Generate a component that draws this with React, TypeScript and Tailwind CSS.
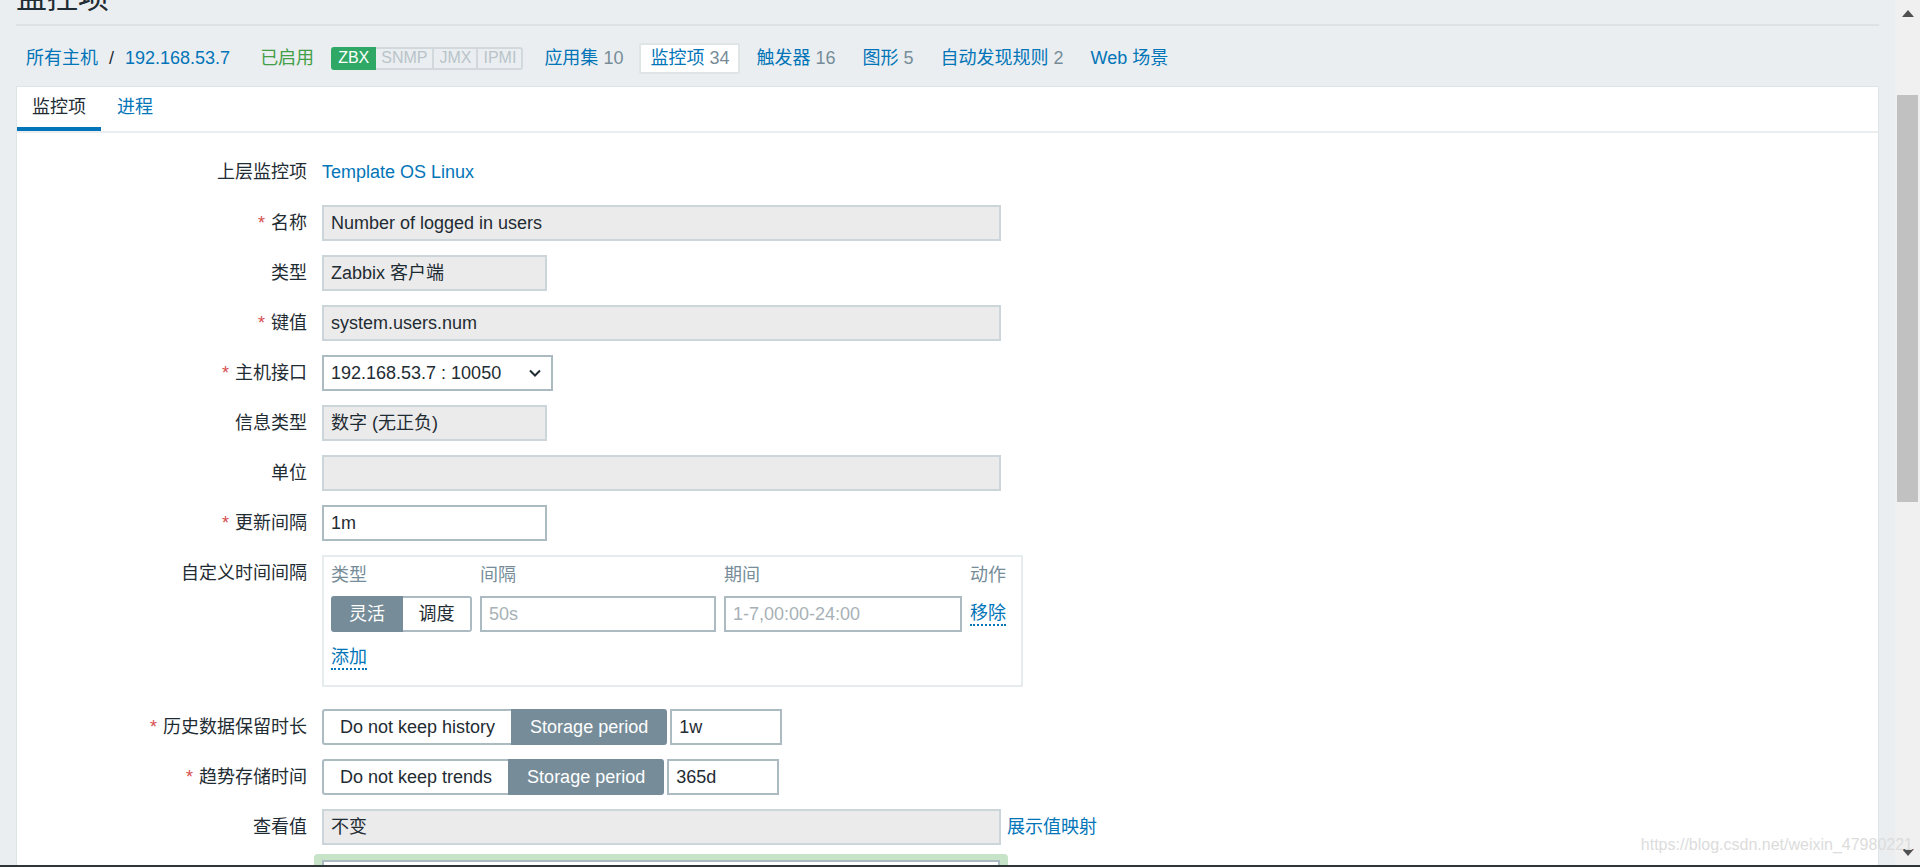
import React from "react";

const navTabs = [
  { name: "应用集", count: "10" },
  { name: "监控项", count: "34", active: true },
  { name: "触发器", count: "16" },
  { name: "图形", count: "5" },
  { name: "自动发现规则", count: "2" },
  { name: "Web 场景" },
];

const badges = ["SNMP", "JMX", "IPMI"];

function Label({ text, required }: { text: string; required?: boolean }) {
  return (
    <div className="w-[290px] h-[36px] flex-shrink-0 flex items-center justify-end text-[#1f2c33]">
      {required && <span className="text-[#d64e4e] mr-[6px]">*</span>}
      {text}
    </div>
  );
}

function Row({
  label,
  required,
  children,
  className = "",
}: {
  label: string;
  required?: boolean;
  children: React.ReactNode;
  className?: string;
}) {
  return (
    <div className={`flex items-start gap-[15px] ${className}`}>
      <Label text={label} required={required} />
      {children}
    </div>
  );
}

function Field({
  value,
  width,
  readOnly,
  placeholder,
}: {
  value?: string;
  width: string;
  readOnly?: boolean;
  placeholder?: string;
}) {
  return (
    <div
      className={`${width} h-[36px] border-2 px-[7px] flex items-center whitespace-nowrap ${
        readOnly
          ? "bg-[#ebebeb] border-[#ccd5d9] text-[#1f2c33]"
          : "bg-white border-[#acbbc2] text-[#1f2c33]"
      }`}
    >
      {value ?? <span className="text-[#a7b1b6]">{placeholder}</span>}
    </div>
  );
}

function Toggle({ off, on }: { off: string; on: string }) {
  return (
    <div className="flex h-[36px]">
      <div className="px-[16px] flex items-center bg-white border-2 border-r-0 border-[#acbbc2] rounded-l-[3px] text-[#1f2c33] whitespace-nowrap">
        {off}
      </div>
      <div className="px-[17px] flex items-center bg-[#768d99] border-2 border-[#768d99] rounded-r-[3px] text-white whitespace-nowrap">
        {on}
      </div>
    </div>
  );
}

function DottedLink({ children }: { children: React.ReactNode }) {
  return (
    <span className="text-[#0275b8] border-b-2 border-dotted border-[#0275b8] leading-[22px]">
      {children}
    </span>
  );
}

export default function App() {
  return (
    <div className="w-[1920px] h-[867px] flex flex-col overflow-hidden bg-[#ebeef0] text-[18px] font-['Liberation_Sans','Noto_Sans_CJK_SC',sans-serif] relative">
      <div className="h-[865px] shrink-0 flex overflow-hidden">
        {/* main column */}
        <div className="flex-1 min-h-0 px-[16px] flex flex-col">
          {/* header */}
          <div className="h-[26px] shrink-0 border-b-2 border-[#dde2e5]">
            <h1 className="text-[31px] leading-[31px] mt-[-18px] text-[#1f2c33]">监控项</h1>
          </div>

          {/* host nav */}
          <div className="h-[60px] shrink-0 pt-[4px] pl-[10px] flex items-center whitespace-nowrap">
            <span className="text-[#0275b8]">所有主机</span>
            <span className="mx-[11px] text-[#1f2c33]">/</span>
            <span className="text-[#0275b8]">192.168.53.7</span>
            <span className="ml-[30px] text-[#429e47]">已启用</span>
            <div className="ml-[17px] flex h-[23px] text-[16px] leading-none">
              <span className="px-[5px] flex items-center bg-[#2fa866] border-2 border-[#2fa866] rounded-l-[3px] text-white">
                ZBX
              </span>
              {badges.map((b, i) => (
                <span
                  key={b}
                  className={`px-[5px] flex items-center border-2 border-l-0 border-[#d1d9dd] text-[#b8c4ca] ${
                    i === badges.length - 1 ? "rounded-r-[3px]" : ""
                  }`}
                >
                  {b}
                </span>
              ))}
            </div>
            <div className="ml-[10px] flex items-center gap-[5px]">
              {navTabs.map((t) => (
                <div
                  key={t.name}
                  className={`h-[31px] px-[9px] flex items-center border-2 rounded-[2px] ${
                    t.active ? "bg-white border-[#dfe4e7]" : "border-transparent"
                  }`}
                >
                  <span className="text-[#0275b8]">{t.name}</span>
                  {t.count && <span className="ml-[5px] text-[#768d99]">{t.count}</span>}
                </div>
              ))}
            </div>
          </div>

          {/* panel */}
          <div className="flex-1 min-h-0 overflow-hidden bg-white border border-b-0 border-[#dfe4e7]">
            <div className="flex border-b-2 border-[#ebeef0]">
              <div className="h-[44px] px-[15px] flex items-center border-b-4 border-[#0275b8] text-[#1f2c33]">
                监控项
              </div>
              <div className="h-[44px] px-[16px] flex items-center border-b-4 border-transparent text-[#0275b8]">
                进程
              </div>
            </div>

            <div className="pt-[20px] flex flex-col">
              <div className="flex items-center gap-[15px] h-[38px] mb-[14px]">
                <div className="w-[290px] flex justify-end text-[#1f2c33]">上层监控项</div>
                <span className="text-[#0275b8]">Template OS Linux</span>
              </div>

              <div className="flex flex-col gap-[14px]">
                <Row label="名称" required>
                  <Field width="w-[679px]" readOnly value="Number of logged in users" />
                </Row>
                <Row label="类型">
                  <Field width="w-[225px]" readOnly value="Zabbix 客户端" />
                </Row>
                <Row label="键值" required>
                  <Field width="w-[679px]" readOnly value="system.users.num" />
                </Row>
                <Row label="主机接口" required>
                  <div className="w-[231px] h-[36px] border-2 border-[#acbbc2] bg-white pl-[7px] pr-[10px] flex items-center justify-between text-[#1f2c33]">
                    <span>192.168.53.7 : 10050</span>
                    <svg width="12" height="8" viewBox="0 0 12 8" fill="none">
                      <path d="M1 1.5 L6 6.5 L11 1.5" stroke="#1f2c33" strokeWidth="2" />
                    </svg>
                  </div>
                </Row>
                <Row label="信息类型">
                  <Field width="w-[225px]" readOnly value="数字 (无正负)" />
                </Row>
                <Row label="单位">
                  <Field width="w-[679px]" readOnly value="" />
                </Row>
                <Row label="更新间隔" required>
                  <Field width="w-[225px]" value="1m" />
                </Row>
                <Row label="自定义时间间隔">
                  <div className="w-[701px] border-2 border-[#e6ebee] pt-[3px] pb-[13px] pl-[7px] pr-[14px]">
                    <div className="grid grid-cols-[141px_236px_238px_auto] gap-x-[8px]">
                      <div className="h-[30px] flex items-center text-[#768d99]">类型</div>
                      <div className="h-[30px] flex items-center text-[#768d99]">间隔</div>
                      <div className="h-[30px] flex items-center text-[#768d99]">期间</div>
                      <div className="h-[30px] flex items-center text-[#768d99]">动作</div>
                      <div className="mt-[6px] flex h-[36px]">
                        <div className="w-[72px] flex items-center justify-center bg-[#768d99] border-2 border-[#768d99] rounded-l-[3px] text-white">
                          灵活
                        </div>
                        <div className="flex-1 flex items-center justify-center bg-white border-2 border-l-0 border-[#acbbc2] rounded-r-[3px] text-[#1f2c33]">
                          调度
                        </div>
                      </div>
                      <div className="mt-[6px]">
                        <Field width="w-full" placeholder="50s" />
                      </div>
                      <div className="mt-[6px]">
                        <Field width="w-full" placeholder="1-7,00:00-24:00" />
                      </div>
                      <div className="mt-[6px] h-[36px] flex items-center">
                        <DottedLink>移除</DottedLink>
                      </div>
                    </div>
                    <div className="mt-[12px] h-[28px] flex items-center">
                      <DottedLink>添加</DottedLink>
                    </div>
                  </div>
                </Row>
                <Row label="历史数据保留时长" required className="mt-[8px]">
                  <div className="flex gap-[3px]">
                    <Toggle off="Do not keep history" on="Storage period" />
                    <Field width="w-[112px]" value="1w" />
                  </div>
                </Row>
                <Row label="趋势存储时间" required>
                  <div className="flex gap-[3px]">
                    <Toggle off="Do not keep trends" on="Storage period" />
                    <Field width="w-[112px]" value="365d" />
                  </div>
                </Row>
                <Row label="查看值">
                  <div className="flex items-center gap-[6px]">
                    <Field width="w-[679px]" readOnly value="不变" />
                    <span className="text-[#0275b8]">展示值映射</span>
                  </div>
                </Row>
                <div className="-mt-[5px] flex items-start gap-[7px]">
                  <div className="w-[290px] shrink-0" />
                  <div className="w-[694px] bg-[#c7e4c9] rounded-t-[4px] pt-[6px] px-[8px]">
                    <div className="h-[36px] bg-white border-2 border-[#acbbc2]" />
                  </div>
                </div>
              </div>
            </div>
          </div>
        </div>

        {/* scrollbar */}
        <div className="w-[25px] shrink-0 bg-[#f0f0f0] flex flex-col items-center">
          <div className="h-[26px] shrink-0 flex items-center justify-center">
            <svg width="12" height="7" viewBox="0 0 12 7">
              <polygon points="6,0 12,7 0,7" fill="#505050" />
            </svg>
          </div>
          <div className="mt-[69px] shrink-0 w-[21px] h-[407px] bg-[#c1c1c1]" />
          <div className="flex-1" />
          <div className="h-[26px] shrink-0 flex items-center justify-center">
            <svg width="12" height="7" viewBox="0 0 12 7">
              <polygon points="0,0 12,0 6,7" fill="#505050" />
            </svg>
          </div>
        </div>
      </div>
      <div className="h-[2px] shrink-0 bg-[#2e3539]" />

      <span className="absolute right-[7px] bottom-[10px] text-[16px] text-[#dcdcdc] whitespace-nowrap">
        https://blog.csdn.net/weixin_47980221
      </span>
    </div>
  );
}
